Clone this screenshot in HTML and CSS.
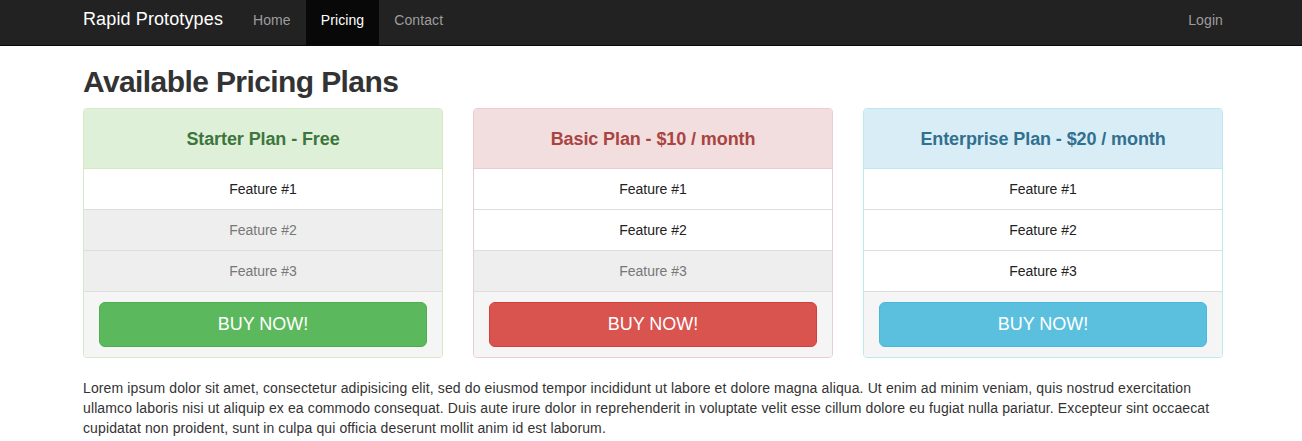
FILE: index.html
```html
<!DOCTYPE html>
<html lang="en">
<head>
<meta charset="utf-8">
<title>Rapid Prototypes - Pricing</title>
<link rel="stylesheet" href="styles.css">
</head>
<body>
<nav class="navbar">
  <div class="container nav-inner">
    <a class="brand" href="#">Rapid Prototypes</a>
    <ul class="nav-links">
      <li><a href="#">Home</a></li>
      <li><a class="active" href="#">Pricing</a></li>
      <li><a href="#">Contact</a></li>
    </ul>
    <ul class="nav-links nav-right">
      <li><a href="#">Login</a></li>
    </ul>
  </div>
</nav>
<main class="container">
  <h2 class="page-title">Available Pricing Plans</h2>
  <div class="plans">
    <div class="panel panel-success">
      <div class="panel-heading"><h3>Starter Plan - Free</h3></div>
      <ul class="features">
        <li>Feature #1</li>
        <li class="off">Feature #2</li>
        <li class="off">Feature #3</li>
      </ul>
      <div class="panel-footer"><a class="btn btn-success" href="#">BUY NOW!</a></div>
    </div>
    <div class="panel panel-danger">
      <div class="panel-heading"><h3>Basic Plan - $10 / month</h3></div>
      <ul class="features">
        <li>Feature #1</li>
        <li>Feature #2</li>
        <li class="off">Feature #3</li>
      </ul>
      <div class="panel-footer"><a class="btn btn-danger" href="#">BUY NOW!</a></div>
    </div>
    <div class="panel panel-info">
      <div class="panel-heading"><h3>Enterprise Plan - $20 / month</h3></div>
      <ul class="features">
        <li>Feature #1</li>
        <li>Feature #2</li>
        <li>Feature #3</li>
      </ul>
      <div class="panel-footer"><a class="btn btn-info" href="#">BUY NOW!</a></div>
    </div>
  </div>
  <p class="lorem">Lorem ipsum dolor sit amet, consectetur adipisicing elit, sed do eiusmod tempor incididunt ut labore et dolore magna aliqua. Ut enim ad minim veniam, quis nostrud exercitation ullamco laboris nisi ut aliquip ex ea commodo consequat. Duis aute irure dolor in reprehenderit in voluptate velit esse cillum dolore eu fugiat nulla pariatur. Excepteur sint occaecat cupidatat non proident, sunt in culpa qui officia deserunt mollit anim id est laborum.</p>
</main>
</body>
</html>
```

FILE: styles.css
```css
* { box-sizing: border-box; }
html, body { margin: 0; padding: 0; }
body {
  font-family: "Liberation Sans", Arial, Helvetica, sans-serif;
  font-size: 14px;
  line-height: 20px;
  color: #333;
  background: #fff;
}
a { text-decoration: none; }

.container {
  width: 1144px;
  margin: 0 auto;
  padding-left: 4px;
}

.navbar {
  background: #222;
  border-bottom: 1px solid #080808;
}
.nav-inner {
  display: flex;
  align-items: stretch;
  height: 45px;
}
.brand {
  color: #fff;
  font-size: 18px;
  line-height: 20px;
  letter-spacing: 0.12px;
  padding: 9px 15px 16px 0;
  display: block;
}
.nav-links {
  list-style: none;
  margin: 0;
  padding: 0;
  display: flex;
}
.nav-links a {
  display: block;
  color: #9d9d9d;
  padding: 10px 15px 15px;
  line-height: 20px;
  height: 45px;
  letter-spacing: 0.1px;
}
.nav-links a.active {
  background: #080808;
  color: #fff;
}
.nav-right { margin-left: auto; }
.nav-right a { padding-right: 0; }

.page-title {
  font-size: 30px;
  font-weight: bold;
  line-height: 33px;
  letter-spacing: -0.6px;
  margin: 19px 0 10px;
  color: #333;
}

.plans {
  display: grid;
  grid-template-columns: repeat(3, 360px);
  column-gap: 30px;
}
.panel {
  border: 1px solid #ddd;
  border-radius: 4px;
  margin-bottom: 20px;
  background: #fff;
  overflow: hidden;
}
.panel-heading {
  padding: 11px 15px 9px;
  border-bottom: 1px solid #ddd;
  text-align: center;
}
.panel-heading h3 {
  margin: 0;
  font-size: 18px;
  font-weight: bold;
  line-height: 39px;
  letter-spacing: -0.1px;
}
.panel-success { border-color: #d6e9c6; }
.panel-success .panel-heading { background: #dff0d8; color: #3c763d; border-bottom-color: #d6e9c6; }
.panel-danger { border-color: #ebccd1; }
.panel-danger .panel-heading { background: #f2dede; color: #a94442; border-bottom-color: #ebccd1; }
.panel-info { border-color: #bce8f1; }
.panel-info .panel-heading { background: #d9edf7; color: #31708f; border-bottom-color: #bce8f1; }

.features {
  list-style: none;
  margin: 0;
  padding: 0;
}
.features li {
  padding: 10px 15px;
  text-align: center;
  color: #222;
  border-bottom: 1px solid #ddd;
  background: #fff;
}
.features li.off {
  background: #eee;
  color: #777;
}

.panel-footer {
  background: #f5f5f5;
  padding: 10px 15px;
}
.btn {
  display: block;
  text-align: center;
  font-size: 18px;
  line-height: 23px;
  padding: 10px 16px;
  border: 1px solid transparent;
  border-radius: 6px;
  color: #fff;
}
.btn-success { background: #5cb85c; border-color: #4cae4c; }
.btn-danger { background: #d9534f; border-color: #d43f3a; }
.btn-info { background: #5bc0de; border-color: #46b8da; }

.lorem {
  margin: 0 0 10px;
  color: #333;
  letter-spacing: 0.12px;
}
```
